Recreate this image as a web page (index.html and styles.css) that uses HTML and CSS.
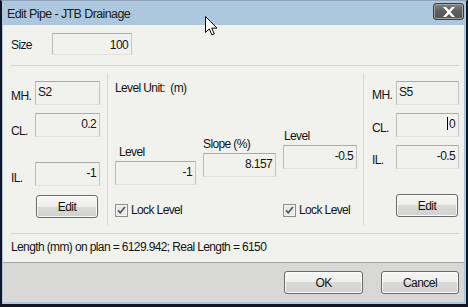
FILE: index.html
```html
<!DOCTYPE html>
<html>
<head>
<meta charset="utf-8">
<link rel="stylesheet" href="styles.css">
</head>
<body>
<div class="window">
  <div class="titlebar">
    <span class="title">Edit Pipe - JTB Drainage</span>
    <span class="close"><svg width="14" height="10" viewBox="0 0 14 10"><path d="M1 0h3l3 3 3-3h3l-4.5 5L13 10h-3L7 7 4 10H1l4.5-5z" fill="#fff"/></svg></span>
  </div>
  <div class="client">
    <div class="size-row">
      <span class="size-label">Size</span>
      <div class="box box-size right">100</div>
    </div>
    <div class="hr"></div>
    <div class="groups">
      <div class="col col-left">
        <div class="row r1"><span class="lbl l-mh">MH.</span><div class="box box-l left">S2</div></div>
        <div class="row r2"><span class="lbl l-cl">CL.</span><div class="box box-l right">0.2</div></div>
        <div class="row r3"><span class="lbl l-il">IL.</span><div class="box box-l right">-1</div></div>
        <button class="btn btn-edit edit-left">Edit</button>
      </div>
      <div class="col col-mid">
        <div class="unit">Level Unit:&nbsp; (m)</div>
        <div class="fields">
          <div class="field f1"><span class="flabel">Level</span><div class="box box-f1 right">-1</div></div>
          <div class="field f2"><span class="flabel">Slope (%)</span><div class="box box-f2 right">8.157</div></div>
          <div class="field f3"><span class="flabel">Level</span><div class="box box-f3 right">-0.5</div></div>
        </div>
        <div class="checks">
          <label class="check c1"><span class="cb"><svg width="13" height="13" viewBox="0 0 13 13"><rect x="0.5" y="0.5" width="12" height="12" fill="#e9e9e6" stroke="#8d8d8d"/><rect x="1.5" y="1.5" width="10" height="10" fill="none" stroke="#f7f7f5"/><path d="M3 6.2l2.2 2.6L10 3" fill="none" stroke="#4e5560" stroke-width="1.7"/></svg></span>Lock Level</label>
          <label class="check c2"><span class="cb"><svg width="13" height="13" viewBox="0 0 13 13"><rect x="0.5" y="0.5" width="12" height="12" fill="#e9e9e6" stroke="#8d8d8d"/><rect x="1.5" y="1.5" width="10" height="10" fill="none" stroke="#f7f7f5"/><path d="M3 6.2l2.2 2.6L10 3" fill="none" stroke="#4e5560" stroke-width="1.7"/></svg></span>Lock Level</label>
        </div>
      </div>
      <div class="col col-right">
        <div class="row q1"><span class="lbl m-mh">MH.</span><div class="box box-r left">S5</div></div>
        <div class="row q2"><span class="lbl m-cl">CL.</span><div class="box box-r right"><span class="caret"></span>0</div></div>
        <div class="row q3"><span class="lbl m-il">IL.</span><div class="box box-r right">-0.5</div></div>
        <button class="btn btn-edit edit-right">Edit</button>
      </div>
    </div>
    <div class="hr hr2"></div>
    <div class="length">Length (mm) on plan = 6129.942; Real Length = 6150</div>
  </div>
  <div class="footer">
    <button class="btn btn-ok">OK</button>
    <button class="btn btn-cancel">Cancel</button>
  </div>
  <svg class="cursor" width="13" height="20" viewBox="0 0 13 20"><path d="M0.5 0.5v16l3.8-3.6 2.6 6 2.4-1-2.6-5.8h5.3z" fill="#fff" stroke="#000" stroke-width="1"/></svg>
</div>
</body>
</html>
```
FILE: styles.css
```css
* { box-sizing: border-box; }
html, body { margin: 0; padding: 0; }
body {
  width: 468px;
  height: 307px;
  overflow: hidden;
  font-family: "Liberation Sans", Arial, sans-serif;
  font-size: 12px;
  letter-spacing: -0.62px;
  color: #141414;
  background: #0f1320;
}
.window {
  position: relative;
  width: 468px;
  height: 307px;
  border-left: 2px solid #121624;
  border-right: 2px solid #121624;
  border-bottom: 3px solid #121624;
  border-top: 1px solid #8fa2b8;
  background: #aec7df;
  padding: 0 2px 2px 1px;
  display: flex;
  flex-direction: column;
}
.titlebar {
  height: 24px;
  display: flex;
  align-items: center;
  justify-content: space-between;
  padding: 0 0 0 4px;
  background: #adc7df;
}
.title {
  font-size: 12.5px;
  letter-spacing: -0.6px;
  color: #1b1b1b;
  margin-top: 1px;
}
.close {
  width: 31px;
  height: 17px;
  margin-top: -3px;
  border: 1px solid #3d3d3d;
  border-radius: 3px;
  background: linear-gradient(#848484, #5e5e5e 50%, #555555);
  box-shadow: inset 0 0 0 1px #a0a0a0;
  display: flex;
  align-items: center;
  justify-content: center;
}
.client {
  flex: 1;
  background: #f1f2ee;
  padding: 8px 4px 0 8px;
  display: flex;
  flex-direction: column;
}
.size-row {
  display: flex;
  align-items: center;
  height: 22px;
}
.size-label { width: 41px; margin-top: 2px; }
.box {
  height: 24px;
  border-top: 1px solid #a9a9a9;
  border-left: 1px solid #bdbdbd;
  border-right: 1px solid #c4c4c4;
  border-bottom: 1px solid #e3e3e0;
  background: #f1f2ee;
  line-height: 14px;
  padding: 3px 3px 0 2px;
  white-space: nowrap;
}
.box.right { text-align: right; padding-right: 3px; }
.box-size { width: 80px; height: 22px; padding-top: 4px; }
.hr {
  height: 1px;
  width: 448px;
  background: #d5d5d1;
  margin-top: 10px;
}
.groups {
  width: 448px;
  height: 152px;
  margin-top: 7px;
  display: grid;
  grid-template-columns: 97px 256px 95px;
}
.col { display: flex; flex-direction: column; align-items: flex-start; }
.col-left { border-right: 1px solid #d8d8d4; }
.col-mid { border-right: 1px solid #d8d8d4; padding-left: 7px; }
.col-right { padding-left: 8px; }
.row { display: flex; align-items: flex-start; }
.lbl { width: 24px; line-height: 14px; }
.box-l { width: 65px; }
.box-r { width: 63px; }
.r1 { margin-top: 8px; }
.r2 { margin-top: 8px; }
.r3 { margin-top: 24px; }
.l-mh { margin-top: 8px; }
.l-cl { margin-top: 11px; }
.l-il { margin-top: 9px; }
.q1 { margin-top: 8px; }
.q2 { margin-top: 8px; }
.q3 { margin-top: 8px; }
.m-mh { margin-top: 7px; }
.m-cl { margin-top: 8px; }
.m-il { margin-top: 8px; }
.btn {
  font-family: "Liberation Sans", Arial, sans-serif;
  font-size: 12px;
  letter-spacing: -0.55px;
  color: #141414;
  border: 1px solid #6a6a6a;
  border-radius: 3px;
  background: linear-gradient(#f7f7f6 0%, #eeeeec 50%, #d9d9d7 50%, #d2d2d0 100%);
  box-shadow: inset 0 0 0 1px #fafafa;
  padding: 0;
  line-height: 14px;
  height: 23px;
}
.btn-edit { width: 62px; }
.edit-left { margin-top: 9px; margin-left: 25px; }
.edit-right { margin-top: 25px; margin-left: 24px; }
.unit { margin-top: 8px; line-height: 14px; }
.fields { display: flex; align-items: flex-start; gap: 7px; }
.field { display: flex; flex-direction: column; }
.flabel { line-height: 14px; margin-bottom: 2px; }
.f1 { margin-top: 50px; }
.f1 .flabel { padding-left: 4px; }
.f2 { margin-top: 42px; }
.f3 { margin-top: 34px; }
.f3 .flabel { padding-left: 1px; }
.box-f1 { width: 81px; }
.box-f2 { width: 73px; }
.box-f3 { width: 74px; }
.checks { display: flex; margin-top: 18px; }
.check { display: flex; align-items: center; line-height: 14px; }
.c1 { width: 168px; }
.cb { width: 13px; height: 13px; margin-right: 3px; display: block; }
.cb svg { display: block; }
.caret {
  display: inline-block;
  width: 1px;
  height: 13px;
  background: #000;
  vertical-align: -2px;
  margin-right: 1px;
}
.hr2 { margin-top: 8px; }
.length { margin-top: 6px; line-height: 14px; }
.footer {
  height: 40px;
  background: #d8d8d6;
  border-top: 1px solid #a2a2a0;
  display: flex;
  justify-content: flex-end;
  align-items: flex-start;
  padding: 8px 5px 0 0;
  gap: 18px;
}
.btn-ok { width: 79px; }
.btn-cancel { width: 78px; }
.cursor { position: absolute; left: 203px; top: 15px; }
```
